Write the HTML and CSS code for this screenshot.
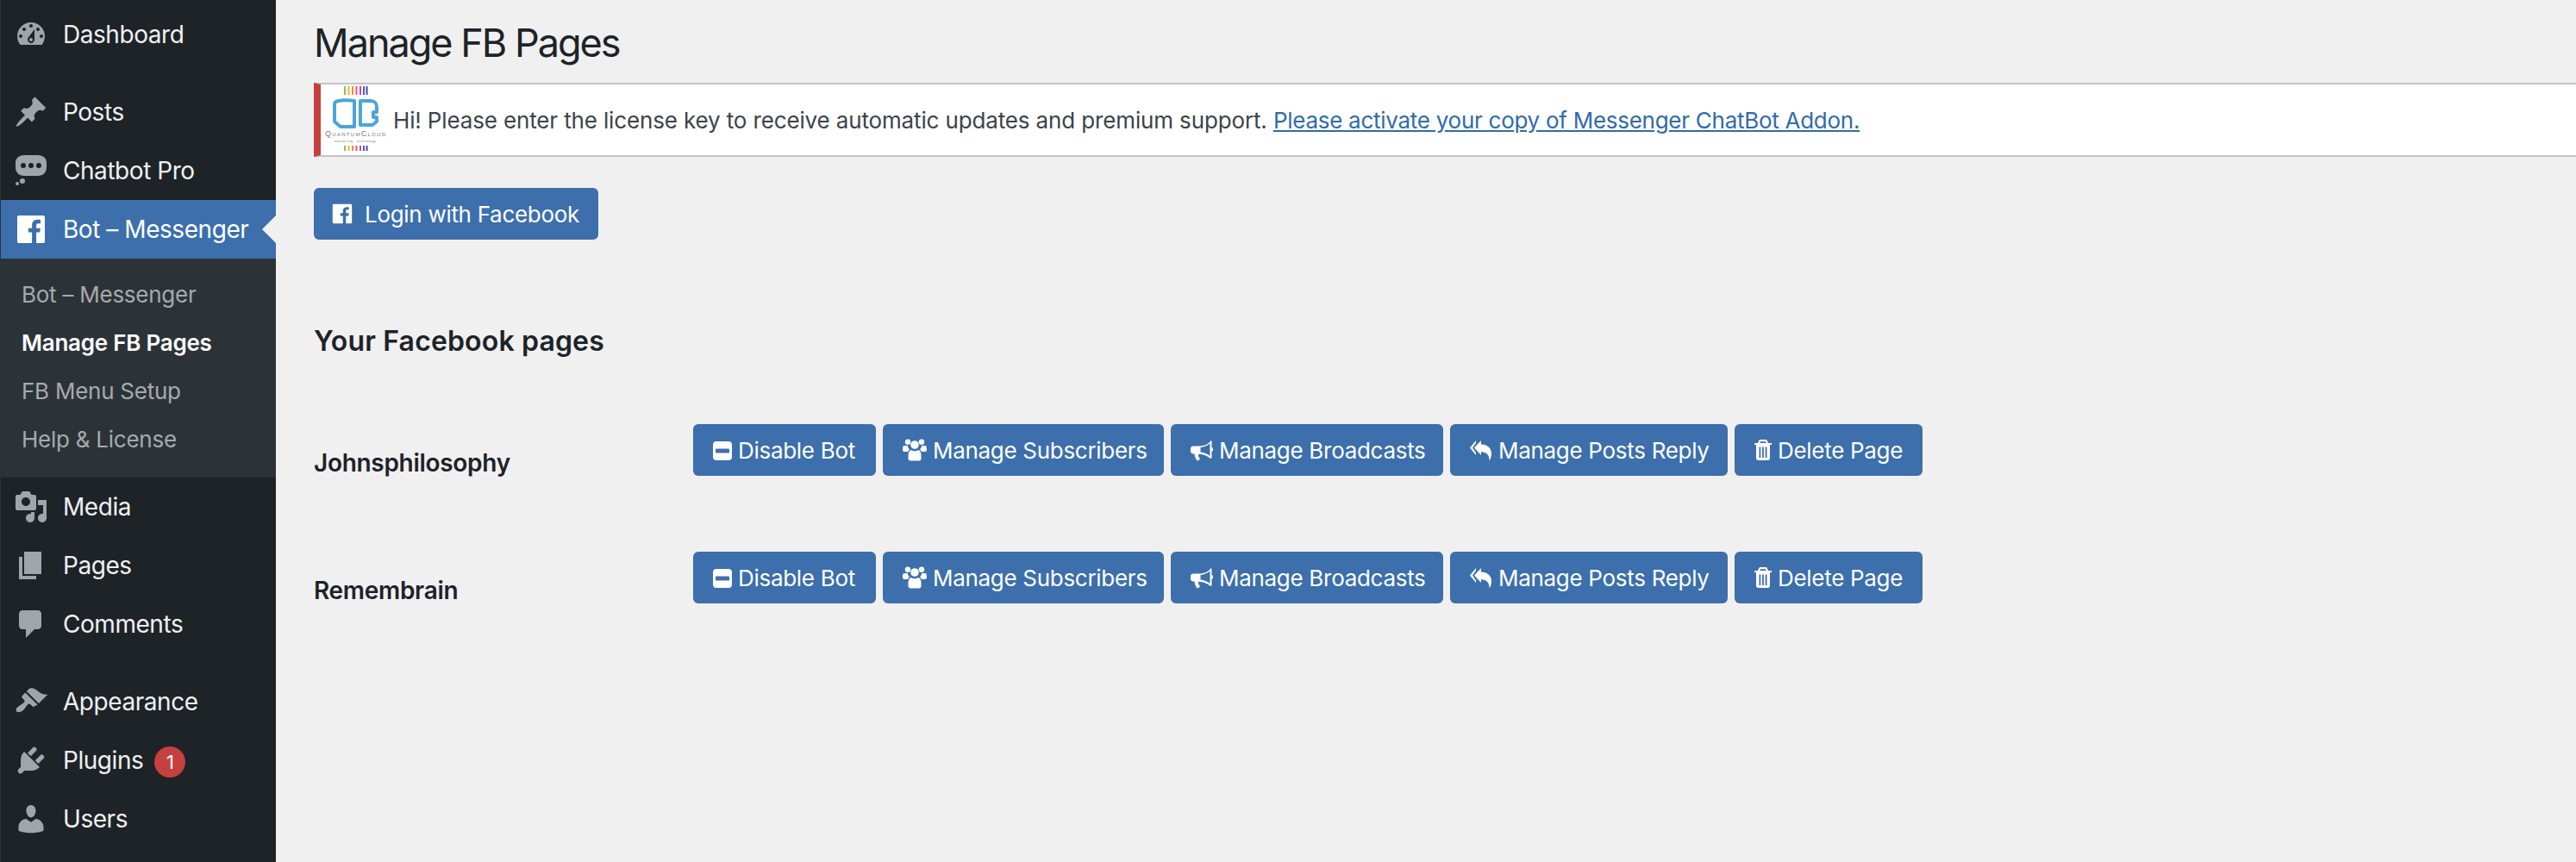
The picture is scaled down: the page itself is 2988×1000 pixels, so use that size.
FILE: index.html
```html
<!DOCTYPE html>
<html lang="en">
<head>
<meta charset="utf-8">
<title>Manage FB Pages</title>
<link rel="stylesheet" href="styles.css">
</head>
<body>
<div class="layout">
<nav class="sidebar">
  <ul class="menu">
    <li class="item"><svg class="mi" viewBox="0 0 20 20"><path fill-rule="evenodd" d="M3.76 16h12.48c1.1-1.37 1.76-3.11 1.76-5 0-4.42-3.58-8-8-8s-8 3.58-8 8c0 1.89.66 3.63 1.76 5zM10 4c.55 0 1 .45 1 1s-.45 1-1 1-1-.45-1-1 .45-1 1-1zM6 6c.55 0 1 .45 1 1s-.45 1-1 1-1-.45-1-1 .45-1 1-1zm8 0c.55 0 1 .45 1 1s-.45 1-1 1-1-.45-1-1 .45-1 1-1zm-5.37 5.55L12 7v6c0 1.1-.9 2-2 2s-2-.9-2-2c0-.57.24-1.08.63-1.45zM4 10c.55 0 1 .45 1 1s-.45 1-1 1-1-.45-1-1 .45-1 1-1zm12 0c.55 0 1 .45 1 1s-.45 1-1 1-1-.45-1-1 .45-1 1-1zm-5 3c0-.55-.45-1-1-1s-1 .45-1 1 .45 1 1 1 1-.45 1-1z"/></svg><span>Dashboard</span></li>
    <li class="item sep"><svg class="mi" viewBox="0 0 20 20"><path d="M10.44 3.02l1.82-1.82 6.36 6.35-1.83 1.82c-1.05-.68-2.48-.57-3.41.36l-.75.75c-.92.93-1.04 2.35-.35 3.41l-1.83 1.82-2.41-2.41-2.8 2.79c-.42.42-3.38 2.71-3.8 2.29s1.86-3.39 2.28-3.81l2.79-2.79L4.1 9.36l1.83-1.82c1.05.69 2.48.57 3.4-.36l.75-.75c.93-.92 1.05-2.35.36-3.41z"/></svg><span>Posts</span></li>
    <li class="item"><svg class="mi" viewBox="0 0 40 40"><path fill-rule="evenodd" d="M12 2h16c6 0 10 3.500 10 9v5c0 6-4 10-10 10H12C6 26 2 22 2 16v-5c0-5.500 4-9 10-9zM11 11a3 3 0 1 0 0 6 3 3 0 0 0 0-6zM20 11a3 3 0 1 0 0 6 3 3 0 0 0 0-6zM29 11a3 3 0 1 0 0 6 3 3 0 0 0 0-6z"/><circle cx="10" cy="32" r="3"/><circle cx="4" cy="35" r="2"/></svg><span>Chatbot Pro</span></li>
    <li class="item active"><svg class="mi" viewBox="0 0 20 20"><path d="M2.89 2h14.23c.49 0 .88.39.88.88v14.24c0 .48-.39.88-.88.88h-4.08v-6.2h2.08l.31-2.41h-2.39V7.85c0-.7.2-1.18 1.2-1.18h1.28V4.51c-.22-.03-.98-.09-1.86-.09-1.85 0-3.11 1.12-3.11 3.18v1.78H8.46v2.41h2.09V18H2.89c-.49 0-.89-.4-.89-.88V2.88c0-.49.4-.88.89-.88z"/></svg><span>Bot – Messenger</span></li>
    <li class="submenu">
      <ul>
        <li>Bot – Messenger</li>
        <li class="current">Manage FB Pages</li>
        <li>FB Menu Setup</li>
        <li>Help &amp; License</li>
      </ul>
    </li>
    <li class="item"><svg class="mi" viewBox="0 0 20 20"><path fill-rule="evenodd" d="M13 11V4c0-.55-.45-1-1-1h-1.67L9 1H5L3.67 3H2c-.55 0-1 .45-1 1v7c0 .55.45 1 1 1h10c.55 0 1-.45 1-1zM7 4.500c1.38 0 2.500 1.120 2.500 2.500S8.380 9.500 7 9.500 4.500 8.380 4.500 7 5.620 4.500 7 4.500zM14 6h5v10.500c0 1.380-1.120 2.500-2.500 2.500S14 17.880 14 16.500s1.120-2.500 2.500-2.500c.17 0 .34.02.5.05V9h-3V6zm-4 8.050V13h2v3.500c0 1.380-1.120 2.500-2.500 2.500S7 17.880 7 16.500 8.120 14 9.500 14c.17 0 .34.02.5.05z"/></svg><span>Media</span></li>
    <li class="item"><svg class="mi" viewBox="0 0 20 20"><path d="M6 15V2h10v13H6zm-1 1h8v2H3V5h2v11z"/></svg><span>Pages</span></li>
    <li class="item"><svg class="mi" viewBox="0 0 20 20"><path d="M5 2h9c1.100 0 2 .9 2 2v7c0 1.100-.9 2-2 2h-2l-5 5v-5H5c-1.100 0-2-.9-2-2V4c0-1.100.9-2 2-2z"/></svg><span>Comments</span></li>
    <li class="item sep"><svg class="mi" viewBox="0 0 20 20"><path d="M14.480 11.060L7.410 3.990l1.500-1.500c.5-.56 2.300-.47 3.510.32 1.210.8 1.430 1.280 2.910 2.100 1.180.64 2.450 1.260 4.450.85zm-.71.71L6.700 4.700 4.930 6.470c-.39.39-.39 1.020 0 1.410l1.060 1.060c.39.39.39 1.030 0 1.420-.6.6-1.430 1.110-2.210 1.690-.35.26-.7.53-1.010.84C1.430 13.230.96 15.030 1.750 15.800c.77.79 2.570.32 3.910-1.020.31-.31.58-.66.85-1.020.57-.78 1.080-1.610 1.690-2.210.39-.39 1.020-.39 1.410 0l1.060 1.060c.39.39 1.020.39 1.410 0z"/></svg><span>Appearance</span></li>
    <li class="item"><svg class="mi" viewBox="0 0 20 20"><path d="M13.110 4.360L9.870 7.600 8 5.730l3.240-3.240c.35-.34 1.050-.2 1.560.32.52.51.66 1.210.31 1.550zm-8 1.770l.91-1.120 9.010 9.010-1.190.84c-.71.71-2.630 1.160-3.820 1.160H6.140L4.900 17.260c-.59.59-1.540.59-2.120 0-.59-.58-.59-1.530 0-2.120l1.240-1.240v-3.880c0-1.130.4-3.190 1.090-3.890zm7.260 3.970l3.240-3.240c.34-.35 1.040-.21 1.550.31.52.51.66 1.210.32 1.550l-3.240 3.250z"/></svg><span>Plugins</span><b class="badge">1</b></li>
    <li class="item"><svg class="mi" viewBox="0 0 20 20"><path d="M10 9.250c-2.270 0-2.730-3.440-2.730-3.440C7 4.020 7.820 2 9.970 2c2.160 0 2.980 2.020 2.710 3.810 0 0-.41 3.440-2.680 3.440zm0 2.570L12.720 10c2.390 0 4.520 2.330 4.520 4.530v2.490s-3.650 1.130-7.240 1.130c-3.650 0-7.240-1.130-7.240-1.130v-2.490c0-2.250 1.940-4.480 4.470-4.480z"/></svg><span>Users</span></li>
  </ul>
</nav>
<main class="content">
  <h1 class="title">Manage FB Pages</h1>
  <div class="notice">
    <svg class="logo" viewBox="0 0 80 82">
      <g>
        <rect x="27" y="2" width="2" height="10" fill="#8bc34a"/><rect x="31.500" y="2" width="2" height="10" fill="#f2b632"/><rect x="36" y="2" width="2" height="10" fill="#f08a3c"/><rect x="40.500" y="2" width="2" height="10" fill="#e85a8a"/><rect x="45" y="2" width="2" height="10" fill="#b84fb0"/><rect x="49" y="2" width="2" height="10" fill="#6a4fb8"/><rect x="52.500" y="2" width="2" height="10" fill="#3f4fb0"/>
        <rect x="27" y="71" width="2" height="6" fill="#8bc34a"/><rect x="31.500" y="71" width="2" height="6" fill="#f2b632"/><rect x="36" y="71" width="2" height="6" fill="#f08a3c"/><rect x="40.500" y="71" width="2" height="6" fill="#e85a8a"/><rect x="45" y="71" width="2" height="6" fill="#b84fb0"/><rect x="49" y="71" width="2" height="6" fill="#6a4fb8"/><rect x="52.500" y="71" width="2" height="6" fill="#3f4fb0"/>
      </g>
      <path class="book" d="M16 23c0-2 1-3 3-3.500 6-1.500 12-1.500 20-.5v30H23l-7-6z"/>
      <path class="book" d="M46 19h12c4 0 7 3 7 7v6h-4v6h4v5l-5 4H46z"/>
      <text class="logo-name" x="40" y="60" text-anchor="middle" textLength="70">QuantumCloud</text>
      <text class="logo-sub" x="40" y="67" text-anchor="middle" textLength="48">advancing . technology</text>
    </svg>
    <p class="notice-text">Hi! Please enter the license key to receive automatic updates and premium support. <a href="#" class="link">Please activate your copy of Messenger ChatBot Addon.</a></p>
  </div>
  <a class="btn login"><svg class="fa fb" viewBox="0 0 20 20"><path d="M2.890 2h14.230c.49 0 .88.39.88.88v14.240c0 .48-.39.88-.88.88h-4.080v-6.200h2.080l.31-2.410h-2.390V7.850c0-.7.2-1.180 1.200-1.180h1.280V4.510c-.22-.03-.98-.09-1.860-.09-1.850 0-3.110 1.120-3.110 3.180v1.780H8.460v2.410h2.090V18H2.890c-.49 0-.89-.4-.89-.88V2.880c0-.49.4-.88.89-.88z"/></svg>Login with Facebook</a>
  <h2 class="section">Your Facebook pages</h2>
  <div class="rows">
    <div class="row">
      <div class="name">Johnsphilosophy</div>
      <div class="actions">
        <a class="btn b1"><svg class="fa" viewBox="0 0 22 26"><path fill-rule="evenodd" d="M4 3h14a4 4 0 0 1 4 4v14a4 4 0 0 1-4 4H4a4 4 0 0 1-4-4V7a4 4 0 0 1 4-4zM4 11.500a1 1 0 0 0-1 1v3a1 1 0 0 0 1 1h14a1 1 0 0 0 1-1v-3a1 1 0 0 0-1-1z"/></svg>Disable Bot</a>
        <a class="btn b2"><svg class="fa users" viewBox="0 0 28 26"><circle cx="6" cy="3.700" r="3.200"/><circle cx="22" cy="3.700" r="3.200"/><circle cx="14" cy="7" r="4.800"/><path d="M1.500 8h4.300c.3 1.800 1 3.200 2.200 4.300-.9.800-1.500 1.700-1.900 2.700H2c-1.200 0-2-.7-2-2 0-2 .3-5 1.500-5zM26.500 8h-4.300c-.3 1.800-1 3.200-2.200 4.300.9.800 1.500 1.700 1.900 2.700H26c1.200 0 2-.7 2-2 0-2-.3-5-1.500-5zM9.800 13c2.300 1.700 6.100 1.700 8.400 0 2.200.5 3.300 3 3.300 6.500v3.500c0 1.500-1 2.500-2.500 2.500H9c-1.500 0-2.500-1-2.500-2.500v-3.500c0-3.500 1.100-6 3.300-6.500z"/></svg>Manage Subscribers</a>
        <a class="btn b3"><svg class="fa horn" viewBox="0 0 26 26"><path fill-rule="evenodd" d="M23 2c1 0 1.500.8 1.500 1.500V10c1 .3 1.500 1.200 1.500 2.500s-.5 2.200-1.500 2.500v6.500c0 .7-.5 1.500-1.500 1.500-4-3.500-8-5-13-5.300-1 .4-1.500 1.300-1 2.300.5 1.200 1 2 1.800 2.700-.4 2-2 2.700-3.300 2.500-1.500-2-2.800-4-3-7.700H3c-1.700 0-3-1.300-3-3v-3c0-1.700 1.300-3 3-3h6c6 0 11-1.700 14-5.500zM22.500 5.500c-3 2.500-7 4-11 4.500v5.500c4 .5 8 2 11 4.500z"/></svg>Manage Broadcasts</a>
        <a class="btn b4"><svg class="fa reply" viewBox="0 0 26 26"><path d="M7 2v2.800L3 10.500l4 5.700V19L0 10.500zM13 2v4.500c7 .3 12 4 12 11 0 2.800-1 5.800-2.500 8 .3-6.500-3-10-9.500-10.300V19L5 10.500z"/></svg>Manage Posts Reply</a>
        <a class="btn b5"><svg class="fa trash" viewBox="0 0 20 26"><path fill-rule="evenodd" d="M7 1h6c1 0 1.500.5 2 1.500L16 5h3.300c.4 0 .7.300.7.700v1.300h-2v15c0 1.700-1 3-2.500 3h-11C3 25 2 23.700 2 22V7H0V5.700c0-.4.300-.7.700-.7H4l1-2.500C5.500 1.500 6 1 7 1zM7 3.200 6.200 5h7.600L13 3.200zM5.500 9.500v12.500h1.800V9.500zM9.100 9.500v12.500h1.800V9.500zM12.700 9.500v12.500h1.800V9.500z"/></svg>Delete Page</a>
      </div>
    </div>
    <div class="row">
      <div class="name">Remembrain</div>
      <div class="actions">
        <a class="btn b1"><svg class="fa" viewBox="0 0 22 26"><path fill-rule="evenodd" d="M4 3h14a4 4 0 0 1 4 4v14a4 4 0 0 1-4 4H4a4 4 0 0 1-4-4V7a4 4 0 0 1 4-4zM4 11.500a1 1 0 0 0-1 1v3a1 1 0 0 0 1 1h14a1 1 0 0 0 1-1v-3a1 1 0 0 0-1-1z"/></svg>Disable Bot</a>
        <a class="btn b2"><svg class="fa users" viewBox="0 0 28 26"><circle cx="6" cy="3.700" r="3.200"/><circle cx="22" cy="3.700" r="3.200"/><circle cx="14" cy="7" r="4.800"/><path d="M1.500 8h4.300c.3 1.800 1 3.200 2.200 4.300-.9.800-1.500 1.700-1.900 2.700H2c-1.200 0-2-.7-2-2 0-2 .3-5 1.500-5zM26.500 8h-4.300c-.3 1.800-1 3.200-2.200 4.300.9.800 1.500 1.700 1.900 2.700H26c1.200 0 2-.7 2-2 0-2-.3-5-1.500-5zM9.800 13c2.300 1.700 6.100 1.700 8.400 0 2.200.5 3.300 3 3.300 6.500v3.500c0 1.500-1 2.500-2.500 2.500H9c-1.500 0-2.500-1-2.500-2.500v-3.500c0-3.500 1.100-6 3.300-6.500z"/></svg>Manage Subscribers</a>
        <a class="btn b3"><svg class="fa horn" viewBox="0 0 26 26"><path fill-rule="evenodd" d="M23 2c1 0 1.500.8 1.500 1.500V10c1 .3 1.500 1.200 1.500 2.500s-.5 2.200-1.500 2.500v6.500c0 .7-.5 1.500-1.500 1.500-4-3.500-8-5-13-5.300-1 .4-1.500 1.300-1 2.300.5 1.200 1 2 1.800 2.700-.4 2-2 2.700-3.300 2.500-1.500-2-2.800-4-3-7.700H3c-1.700 0-3-1.300-3-3v-3c0-1.700 1.300-3 3-3h6c6 0 11-1.700 14-5.500zM22.500 5.500c-3 2.500-7 4-11 4.500v5.500c4 .5 8 2 11 4.500z"/></svg>Manage Broadcasts</a>
        <a class="btn b4"><svg class="fa reply" viewBox="0 0 26 26"><path d="M7 2v2.800L3 10.500l4 5.700V19L0 10.500zM13 2v4.500c7 .3 12 4 12 11 0 2.800-1 5.800-2.500 8 .3-6.500-3-10-9.500-10.300V19L5 10.500z"/></svg>Manage Posts Reply</a>
        <a class="btn b5"><svg class="fa trash" viewBox="0 0 20 26"><path fill-rule="evenodd" d="M7 1h6c1 0 1.500.5 2 1.500L16 5h3.300c.4 0 .7.300.7.700v1.300h-2v15c0 1.700-1 3-2.500 3h-11C3 25 2 23.700 2 22V7H0V5.700c0-.4.300-.7.700-.7H4l1-2.500C5.500 1.500 6 1 7 1zM7 3.200 6.200 5h7.600L13 3.200zM5.500 9.500v12.500h1.800V9.500zM9.100 9.500v12.500h1.800V9.500zM12.700 9.500v12.500h1.800V9.500z"/></svg>Delete Page</a>
      </div>
    </div>
  </div>
</main>
</div>
</body>
</html>
```
FILE: styles.css
```css
* { box-sizing: border-box; }
html, body { margin: 0; padding: 0; height: 1000px; overflow: hidden; background: #f0f0f1; }
body { font-family: Inter, "Liberation Sans", sans-serif; color: #1d2327; }
ul { list-style: none; margin: 0; padding: 0; }
.layout { display: flex; height: 1000px; }
.sidebar { width: 320px; flex: none; background: #1d2327; border-left: 1px solid #2c3338; padding-top: 6px; overflow: hidden; }
.item { position: relative; height: 68px; display: flex; align-items: center; font-size: 28px; letter-spacing: -0.45px; color: #f0f0f1; }
.item.sep { margin-top: 22px; }
.mi { width: 40px; height: 40px; margin-left: 15px; margin-right: 17px; flex: none; fill: #a0a5aa; }
.item.active { background: #3c6fac; color: #fff; }
.item.active .mi { fill: #fff; }
.item.active::after { content: ""; position: absolute; right: 0; top: 18px; border: 16px solid transparent; border-left-width: 0; border-right-color: #f0f0f1; }
.submenu { background: #2c3338; padding: 14px 0 16px 24px; font-size: 26px; letter-spacing: -0.25px; color: #a7aaad; }
.submenu li { height: 56px; line-height: 56px; }
.submenu .current { color: #fff; font-weight: 600; }
.badge { margin: 4px 0 0 13px; width: 36px; height: 36px; border-radius: 50%; background: #c5403e; color: #fff; font-size: 22px; font-weight: 400; letter-spacing: 0; text-align: center; line-height: 36px; }
.content { flex: 1; min-width: 0; padding: 0 0 0 44px; }
.title { margin: 0; padding-top: 22px; height: 96px; font-size: 45px; letter-spacing: -2px; font-weight: 400; line-height: 56px; color: #1d2327; }
.notice { display: flex; align-items: center; height: 86px; background: #fff; border: solid #c3c4c7; border-width: 2px 0; border-left: 8px solid #c5403c; }
.logo { width: 80px; height: 82px; flex: none; margin-right: 4px; }
.book { fill: none; stroke: #4ba6d6; stroke-width: 4; stroke-linejoin: round; }
.logo-name { font-family: "Liberation Sans", sans-serif; font-size: 9px; font-variant: small-caps; fill: #777; }
.logo-sub { font-family: "Liberation Sans", sans-serif; font-size: 4px; fill: #888; }
.notice-text { margin: 0; font-size: 26px; letter-spacing: -0.14px; color: #3c434a; }
.link { color: #316ba8; text-decoration: underline; letter-spacing: -0.27px; }
.btn { display: inline-flex; align-items: center; height: 60px; padding: 0 0 0 23px; background: #3c6fac; color: #fff; border-radius: 6px; font-size: 26px; letter-spacing: -0.3px; white-space: nowrap; }
.b1 { width: 212px; }
.b2 { width: 326px; }
.b3 { width: 316px; }
.b4 { width: 322px; }
.b5 { width: 218px; }
.login { margin-top: 36px; width: 330px; padding-left: 22px; }
.fa { height: 26px; width: 22px; margin-right: 7px; fill: #fff; flex: none; }
.fa.fb { width: 28px; height: 28px; margin: 0 12px 0 -3px; }
.fa.users { width: 28px; }
.fa.horn { width: 26px; }
.fa.reply { width: 26px; }
.fa.trash { width: 20px; }
.section { margin: 98px 0 0; font-size: 32px; letter-spacing: 0.15px; font-weight: 600; line-height: 40px; color: #1d2327; }
.rows { margin-top: 76px; display: flex; flex-direction: column; gap: 88px; }
.row { display: flex; height: 60px; }
.name { width: 440px; flex: none; font-size: 28px; letter-spacing: -0.3px; font-weight: 600; line-height: 36px; padding-top: 27px; }
.actions { display: flex; gap: 8px; }
```
